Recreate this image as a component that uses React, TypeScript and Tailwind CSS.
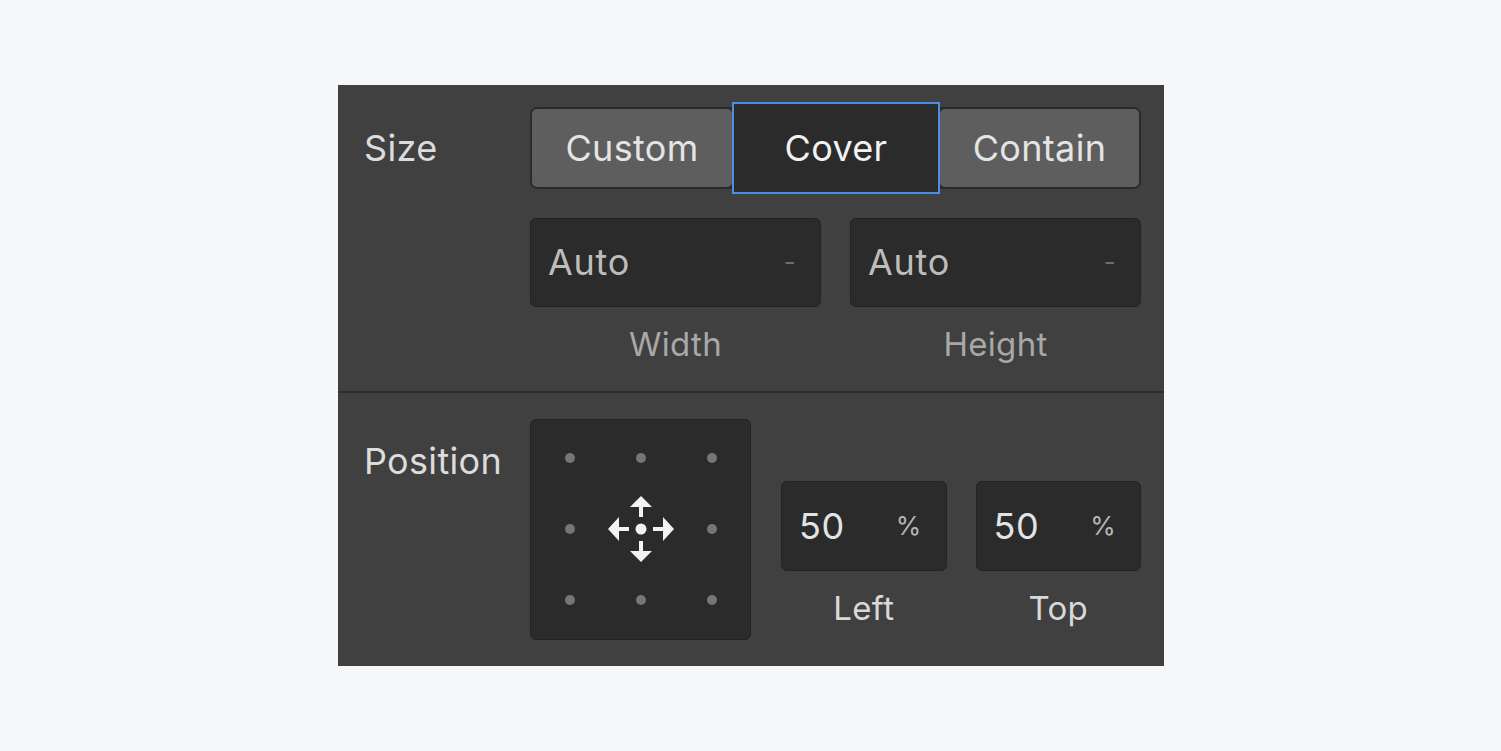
import React from 'react';

const font = { fontFamily: 'Inter, "Noto Sans", sans-serif' };

const MoveIcon: React.FC = () => (
  <svg width="66" height="66" viewBox="0 0 66 66" fill="#f2f2f2">
    {/* up */}
    <polygon points="33,0 44,11 22,11" />
    <rect x="31" y="11" width="4" height="10" />
    {/* down */}
    <rect x="31" y="45" width="4" height="10" />
    <polygon points="22,55 44,55 33,66" />
    {/* left */}
    <polygon points="0,33 11,21 11,45" />
    <rect x="11" y="31" width="10" height="4" />
    {/* right */}
    <rect x="45" y="31" width="10" height="4" />
    <polygon points="55,21 66,33 55,45" />
    <circle cx="33" cy="33" r="5.5" />
  </svg>
);

interface FieldProps {
  value: string;
  unit: string;
  dim?: boolean;
}

const Field: React.FC<FieldProps> = ({ value, unit, dim }) => (
  <div className="flex items-center justify-between rounded-[6px] border border-[#232323] bg-[#2b2b2b] pl-[17px] pr-[24px] h-full">
    <span className={dim ? 'text-[36px] tracking-[0.02em] text-[#bdbdbd]' : 'text-[36px] tracking-[0.02em] text-[#e3e3e3]'}>
      {value}
    </span>
    <span className={dim ? 'text-[26px] text-[#6e6e6e]' : 'text-[26px] text-[#b5b5b5]'}>{unit}</span>
  </div>
);

const App: React.FC = () => {
  const dots = [0, 1, 2, 3, 4, 5, 6, 7, 8];

  return (
    <div className="min-h-screen w-full bg-[#f6f7f9] flex items-center justify-center" style={font}>
      <div className="w-[826px] -mt-[1px] ml-[1px] bg-[#404040] leading-[42px] tracking-[0.02em]">
        {/* Size section */}
        <div className="flex pl-[26px] pr-[22px] pt-[22px] pb-[26px]">
          <div className="w-[166px] h-[82px] flex items-center text-[36px] text-[#dcdcdc]">Size</div>
          <div className="w-[611px] flex flex-col">
            <div className="flex h-[82px] rounded-[7px] bg-[#2b2b2b] p-[2px]">
              <div className="w-[200px] rounded-[5px] bg-[#5e5e5e] flex items-center justify-center text-[36px] text-[#e4e4e4]">
                Custom
              </div>
              <div className="w-[208px] -my-[7px] border-2 border-[#4a8fe3] bg-[#2b2b2b] flex items-center justify-center text-[36px] text-[#f2f2f2]">
                Cover
              </div>
              <div className="flex-1 rounded-[5px] bg-[#5e5e5e] flex items-center justify-center text-[36px] text-[#e4e4e4]">
                Contain
              </div>
            </div>
            <div className="grid grid-cols-2 gap-[29px] mt-[29px]">
              <div className="flex flex-col">
                <div className="h-[89px]">
                  <Field value="Auto" unit="-" dim />
                </div>
                <div className="mt-[16px] text-center text-[33px] text-[#a8a8a8]">Width</div>
              </div>
              <div className="flex flex-col">
                <div className="h-[89px]">
                  <Field value="Auto" unit="-" dim />
                </div>
                <div className="mt-[16px] text-center text-[33px] text-[#a8a8a8]">Height</div>
              </div>
            </div>
          </div>
        </div>

        <div className="h-[2px] bg-[#2e2e2e]" />

        {/* Position section */}
        <div className="flex pl-[26px] pr-[22px] pt-[26px] pb-[26px]">
          <div className="w-[166px] pt-[21px] text-[36px] text-[#dcdcdc]">Position</div>
          <div className="w-[611px] flex">
            <div className="w-[221px] h-[221px] rounded-[6px] border border-[#232323] bg-[#2b2b2b] grid grid-cols-3 grid-rows-3 p-[3px]">
              {dots.map((d) => (
                <div key={d} className="flex items-center justify-center">
                  {d === 4 ? (
                    <MoveIcon />
                  ) : (
                    <span className="w-[10px] h-[10px] rounded-full bg-[#767676]" />
                  )}
                </div>
              ))}
            </div>
            <div className="flex-1 grid grid-cols-2 gap-[29px] ml-[30px] pt-[62px]">
              <div className="flex flex-col">
                <div className="h-[90px]">
                  <Field value="50" unit="%" />
                </div>
                <div className="mt-[16px] text-center text-[33px] text-[#d9d9d9]">Left</div>
              </div>
              <div className="flex flex-col">
                <div className="h-[90px]">
                  <Field value="50" unit="%" />
                </div>
                <div className="mt-[16px] text-center text-[33px] text-[#d9d9d9]">Top</div>
              </div>
            </div>
          </div>
        </div>
      </div>
    </div>
  );
};

export default App;
